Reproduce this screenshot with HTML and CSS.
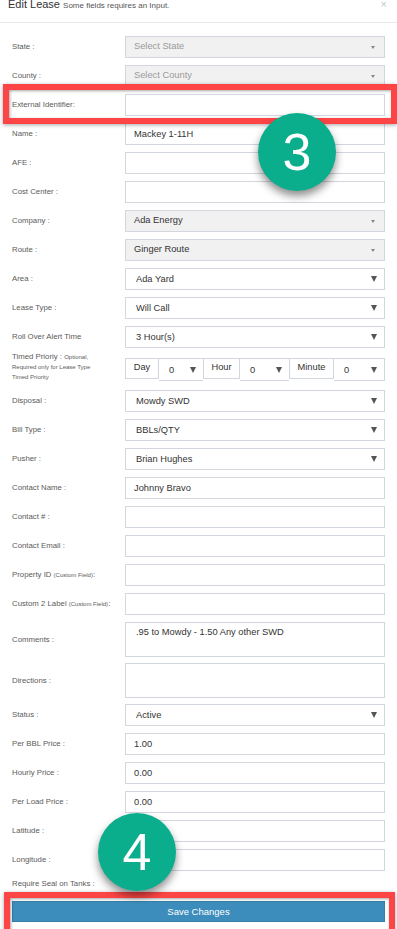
FILE: index.html
```html
<!DOCTYPE html>
<html>
<head>
<meta charset="utf-8">
<link rel="stylesheet" href="styles.css">
</head>
<body>
<div class="modal">
  <div class="modal-header">
    <h4 class="title">Edit Lease <small>Some fields requires an Input.</small></h4>
    <span class="close">×</span>
  </div>
  <div class="modal-body">
    <div class="row"><label>State :</label><div class="s2 placeholder"><span>Select State</span><i class="caret"></i></div></div>
    <div class="row"><label>County :</label><div class="s2 placeholder"><span>Select County</span><i class="caret"></i></div></div>
    <div class="row"><label>External Identifier:</label><input class="ctl" type="text" value=""></div>
    <div class="row"><label>Name :</label><input class="ctl" type="text" value="Mackey 1-11H"></div>
    <div class="row"><label>AFE :</label><input class="ctl" type="text" value=""></div>
    <div class="row"><label>Cost Center :</label><input class="ctl" type="text" value=""></div>
    <div class="row"><label>Company :</label><div class="s2"><span>Ada Energy</span><i class="caret"></i></div></div>
    <div class="row"><label>Route :</label><div class="s2"><span>Ginger Route</span><i class="caret"></i></div></div>
    <div class="row"><label>Area :</label><div class="sel"><span>Ada Yard</span><i class="arrow"></i></div></div>
    <div class="row"><label>Lease Type :</label><div class="sel"><span>Will Call</span><i class="arrow"></i></div></div>
    <div class="row"><label>Roll Over Alert Time</label><div class="sel"><span>3 Hour(s)</span><i class="arrow"></i></div></div>
    <div class="row timed">
      <label class="multi">Timed Prioriy : <small>Optional,<br>Required only for Lease Type<br>Timed Priority</small></label>
      <div class="group">
        <span class="addon w-day">Day</span>
        <div class="gsel w-d"><span>0</span><i class="arrow"></i></div>
        <span class="addon w-hour">Hour</span>
        <div class="gsel w-h"><span>0</span><i class="arrow"></i></div>
        <span class="addon w-min">Minute</span>
        <div class="gsel w-m"><span>0</span><i class="arrow"></i></div>
      </div>
    </div>
    <div class="row"><label>Disposal :</label><div class="sel"><span>Mowdy SWD</span><i class="arrow"></i></div></div>
    <div class="row"><label>Bill Type :</label><div class="sel"><span>BBLs/QTY</span><i class="arrow"></i></div></div>
    <div class="row"><label>Pusher :</label><div class="sel"><span>Brian Hughes</span><i class="arrow"></i></div></div>
    <div class="row"><label>Contact Name :</label><input class="ctl" type="text" value="Johnny Bravo"></div>
    <div class="row"><label>Contact # :</label><input class="ctl" type="text" value=""></div>
    <div class="row"><label>Contact Email :</label><input class="ctl" type="text" value=""></div>
    <div class="row"><label>Property ID <small>(Custom Field)</small>:</label><input class="ctl" type="text" value=""></div>
    <div class="row"><label>Custom 2 Label <small>(Custom Field)</small>:</label><input class="ctl" type="text" value=""></div>
    <div class="row tall"><label>Comments :</label><textarea class="ctl area">.95 to Mowdy - 1.50 Any other SWD</textarea></div>
    <div class="row tall"><label>Directions :</label><textarea class="ctl area"></textarea></div>
    <div class="row"><label>Status :</label><div class="sel"><span>Active</span><i class="arrow"></i></div></div>
    <div class="row"><label>Per BBL Price :</label><input class="ctl" type="text" value="1.00"></div>
    <div class="row"><label>Hourly Price :</label><input class="ctl" type="text" value="0.00"></div>
    <div class="row"><label>Per Load Price :</label><input class="ctl" type="text" value="0.00"></div>
    <div class="row"><label>Latitude :</label><input class="ctl" type="text" value=""></div>
    <div class="row"><label>Longitude :</label><input class="ctl" type="text" value=""></div>
    <div class="row only"><label>Require Seal on Tanks :</label></div>
    <div class="footer"><button class="btn">Save Changes</button></div>
  </div>

  <div class="mark box-ext"></div>
  <div class="mark box-save"></div>
  <div class="badge badge-3">3</div>
  <div class="badge badge-4">4</div>
</div>
</body>
</html>
```

FILE: styles.css
```css
html, body {
  margin: 0;
  padding: 0;
  background: #fff;
}
body {
  width: 397px;
  height: 929px;
  overflow: hidden;
  font-family: "Liberation Sans", Arial, sans-serif;
  color: #333;
}
.modal {
  position: relative;
  width: 397px;
  height: 929px;
  overflow: hidden;
}
.modal-header {
  display: flex;
  justify-content: space-between;
  align-items: flex-start;
  height: 22px;
  border-bottom: 1px solid #e9e9e9;
  padding: 0 8px;
}
.title {
  margin: -1px 0 0 0;
  font-size: 11px;
  line-height: 11px;
  font-weight: normal;
  color: #333;
}
.title small {
  font-size: 8px;
  color: #555;
}
.close {
  font-size: 11px;
  line-height: 8px;
  color: #c8c8c8;
  margin-right: 2px;
}
.modal-body {
  padding: 13px 12px 0 12px;
}
.row {
  display: flex;
  align-items: center;
  margin-bottom: 7px;
}
.row label {
  width: 113px;
  flex: none;
  font-size: 7.8px;
  color: #5b5b5b;
  line-height: 10px;
}
.row label small {
  font-size: 6px;
}
.ctl {
  box-sizing: border-box;
  width: 260px;
  height: 22px;
  margin: 0;
  border: 1px solid #d2d6de;
  background: #fff;
  padding: 0 8px;
  font-family: "Liberation Sans", Arial, sans-serif;
  font-size: 9.3px;
  color: #333;
  outline: none;
}
.ctl.area {
  height: 35px;
  resize: none;
  padding: 4px 10px;
  line-height: 11px;
  display: block;
}
.row.tall {
  margin-bottom: 6px;
}
.s2, .sel {
  box-sizing: border-box;
  width: 260px;
  height: 22px;
  border: 1px solid #d2d6de;
  display: flex;
  align-items: center;
  justify-content: space-between;
  font-size: 9.3px;
}
.s2 {
  background: #f1f1f1;
  padding: 0 9px 0 8px;
  color: #333;
}
.s2 span {
  margin-top: -2px;
}
.s2.placeholder {
  color: #9a9a9a;
}
.caret {
  width: 0;
  height: 0;
  border-left: 2.5px solid transparent;
  border-right: 2.5px solid transparent;
  border-top: 3px solid #888;
}
.sel {
  background: #fff;
  padding: 0 7px 0 10px;
  color: #333;
}
.arrow {
  width: 0;
  height: 0;
  border-left: 3px solid transparent;
  border-right: 3px solid transparent;
  border-top: 6px solid #555;
}
.row.timed {
  height: 23px;
  align-items: flex-start;
  margin-top: 10px;
  margin-bottom: 9px;
}
.row label.multi {
  line-height: 9px;
  margin-top: -6px;
}
.group {
  display: flex;
  width: 260px;
  height: 23px;
}
.addon, .gsel {
  box-sizing: border-box;
  height: 23px;
  border: 1px solid #d2d6de;
  font-size: 9.3px;
  color: #333;
}
.addon {
  display: flex;
  justify-content: center;
  padding-top: 3px;
  height: 21px;
  background: #fff;
}
.gsel {
  display: flex;
  align-items: center;
  justify-content: space-between;
  padding: 0 7px 0 10px;
  border-left: none;
  border-right: none;
}
.w-m { border-right: 1px solid #d2d6de; }
.w-day { width: 34px; }
.w-d { width: 44px; }
.w-hour { width: 37px; }
.w-h { width: 49px; }
.w-min { width: 45px; }
.w-m { width: 51px; }
.row.only {
  height: 11px;
}
.footer {
  margin-top: 12px;
}
.btn {
  display: block;
  box-sizing: border-box;
  width: 373px;
  height: 21px;
  margin: 0;
  border: 1px solid #367fa9;
  background: #3c8dbc;
  color: #fff;
  font-family: "Liberation Sans", Arial, sans-serif;
  font-size: 9.5px;
  padding: 0;
}

/* annotation overlays */
.mark {
  position: absolute;
  box-sizing: border-box;
  border: 6px solid #fd4545;
  box-shadow: 0 1px 4px rgba(0,0,0,0.35), inset 1px 1px 3px rgba(0,0,0,0.35);
}
.box-ext {
  left: 3px;
  top: 84px;
  width: 394px;
  height: 40px;
}
.box-save {
  left: 4px;
  top: 892px;
  width: 391px;
  height: 45px;
}
.badge {
  position: absolute;
  width: 78px;
  height: 78px;
  border-radius: 50%;
  background: #0aae8c;
  color: #fff;
  font-family: "Liberation Sans", Arial, sans-serif;
  font-size: 52px;
  line-height: 78px;
  text-align: center;
  box-shadow: 0 5px 8px rgba(0,0,0,0.45);
}
.badge-3 {
  left: 258px;
  top: 113px;
}
.badge-4 {
  left: 98px;
  top: 813px;
}
```
